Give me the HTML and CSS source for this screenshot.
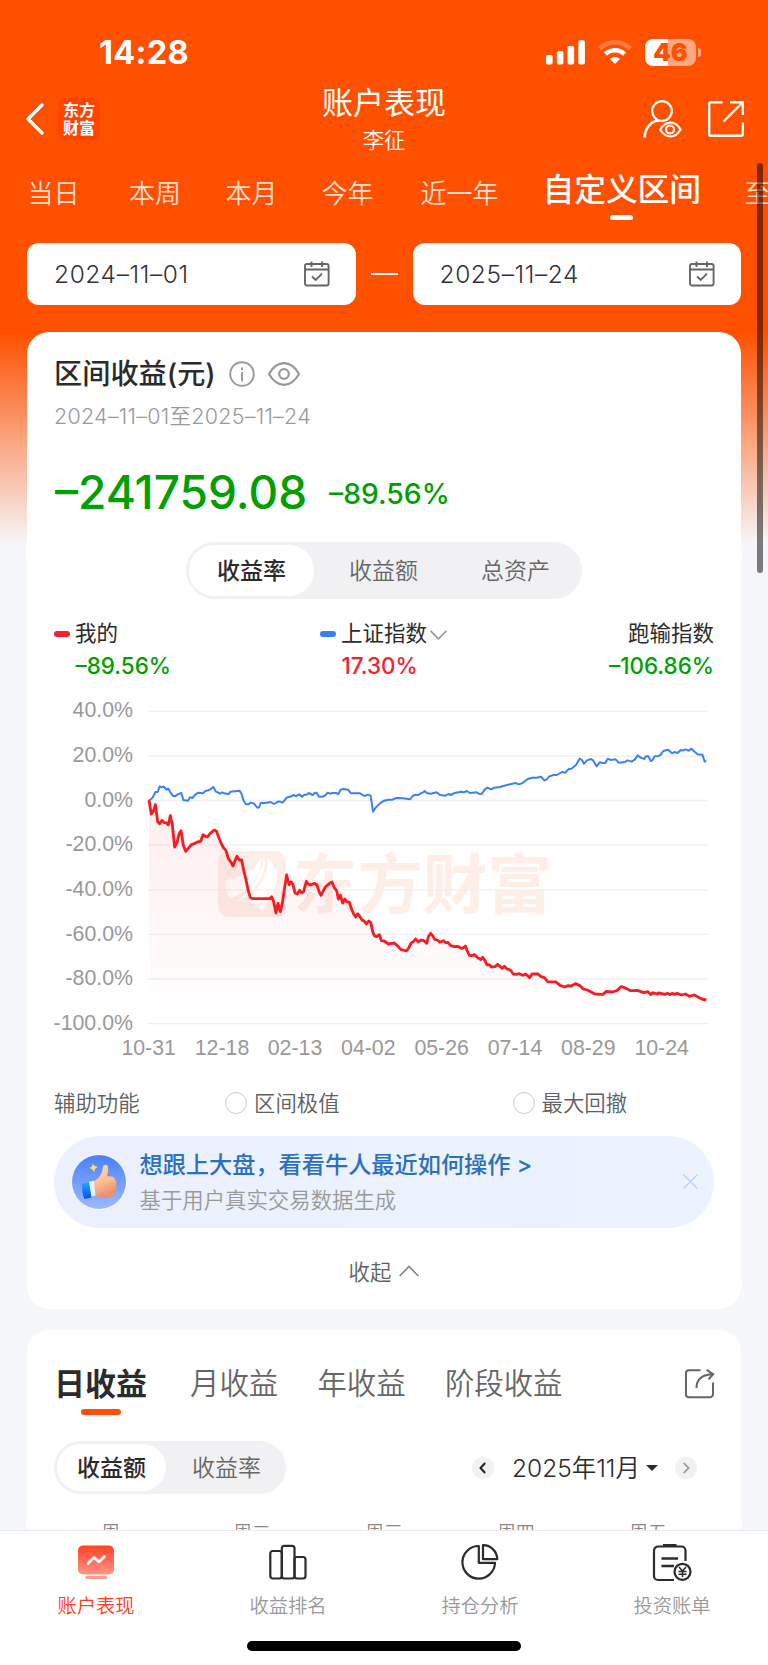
FILE: index.html
```html
<!DOCTYPE html>
<html lang="zh-CN">

<head>
  <meta charset="UTF-8">
  <meta name="viewport" content="width=device-width, initial-scale=1.0">
  <title>账户表现</title>
  <link rel="stylesheet" href="styles.css">
</head>

<body>
  <div class="page">
    <header class="status-bar">
      <span class="time">14:28</span>
      <div class="status-icons">
        <svg width="39" height="25" viewBox="0 0 39 25" fill="#fff">
          <rect x="0" y="15" width="6.6" height="9.6" rx="1.8" />
          <rect x="10.8" y="11" width="6.6" height="13.6" rx="1.8" />
          <rect x="21.5" y="6" width="6.6" height="18.6" rx="1.8" />
          <rect x="32.3" y="0.3" width="6.6" height="24.3" rx="1.8" />
        </svg>
        <svg width="34" height="26" viewBox="0 0 34 26" fill="none" stroke="#fff" stroke-width="4.6">
          <path d="M1.6 9.6a22 22 0 0 1 30.8 0" opacity=".25" />
          <path d="M7.4 15.2a13.6 13.6 0 0 1 19.2 0" />
          <path d="M17 25l-5-5a7.2 7.2 0 0 1 10 0z" fill="#fff" stroke="none" />
        </svg>
        <div class="battery"><span>46</span></div>
      </div>
    </header>

    <nav class="nav">
      <div class="nav-left">
        <svg width="18" height="32" viewBox="0 0 18 32" fill="none" stroke="#fff" stroke-width="3.4" stroke-linecap="round" stroke-linejoin="round">
          <path d="M16 2L2 16l14 14" />
        </svg>
        <div class="logo">东方<br>财富</div>
      </div>
      <div class="nav-title">
        <h1>账户表现</h1>
        <p>李征</p>
      </div>
      <div class="nav-right">
        <svg width="38" height="38" viewBox="0 0 38 38" fill="none" stroke="#fff" stroke-width="2.2">
          <circle cx="19" cy="11" r="9.8" />
          <path d="M1.5 37.5C2 28 8 21 16 20.5" stroke-width="2.6" />
          <path d="M17 29.5c3-4.5 6.500-7 10.500-7s7.500 2.500 10 7c-2.500 4.500-6 7-10 7s-7.500-2.500-10.500-7z" />
          <circle cx="27" cy="29.500" r="4" />
        </svg>
        <svg width="36" height="36" viewBox="0 0 36 36" fill="none" stroke="#fff" stroke-width="2.400">
          <path d="M14.500 1.200H3a1.800 1.800 0 0 0-1.800 1.800v30a1.800 1.800 0 0 0 1.800 1.800h30a1.800 1.800 0 0 0 1.800-1.800V21.500M22 1.200h12.800V14M34.500 1.500L15.500 20.500" />
        </svg>
      </div>
    </nav>

    <div class="range-tabs">
      <span>当日</span>
      <span>本周</span>
      <span>本月</span>
      <span>今年</span>
      <span>近一年</span>
      <span class="active">自定义区间</span>
      <span>至今</span>
    </div>

    <div class="dates">
      <div class="date-box">
        <span>2024–11–01</span>
        <svg width="26" height="26" viewBox="0 0 26 26" fill="none" stroke="#666" stroke-width="1.9">
          <rect x="1" y="3" width="23.600" height="21.500" rx="2" />
          <path d="M1 8.500h23.600M7.500 0.500v5.500M18 0.500v5.500M8 15.500l3.700 3.400 6.300-6.300" />
        </svg>
      </div>
      <i class="date-dash"></i>
      <div class="date-box">
        <span>2025–11–24</span>
        <svg width="26" height="26" viewBox="0 0 26 26" fill="none" stroke="#666" stroke-width="1.9">
          <rect x="1" y="3" width="23.600" height="21.500" rx="2" />
          <path d="M1 8.500h23.600M7.500 0.500v5.500M18 0.500v5.500M8 15.500l3.700 3.400 6.300-6.300" />
        </svg>
      </div>
    </div>

    <section class="card">
      <div class="card-title">
        <h2>区间收益(元)</h2>
        <svg width="26" height="26" viewBox="0 0 26 26" fill="none" stroke="#999" stroke-width="1.900">
          <circle cx="13" cy="13" r="11.800" />
          <path d="M13 11v9.500M13 6.500v2.500" />
        </svg>
        <svg width="32" height="24" viewBox="0 0 32 24" fill="none" stroke="#999" stroke-width="2.200">
          <path d="M1 12C5 5 10 1.200 16 1.200S27 5 31 12c-4 7-9 10.800-15 10.800S5 19 1 12z" stroke-linejoin="round" />
          <circle cx="16" cy="12" r="4.800" />
        </svg>
      </div>
      <p class="card-range">2024–11–01至2025–11–24</p>
      <div class="profit">
        <span class="amount">–241759.08</span>
        <span class="rate">–89.56%</span>
      </div>

      <div class="segment segment-wide">
        <span class="active">收益率</span>
        <span>收益额</span>
        <span>总资产</span>
      </div>

      <div class="legend">
        <div class="legend-item mine">
          <p><i></i>我的</p>
          <b class="green">–89.56%</b>
        </div>
        <div class="legend-item index">
          <p><i></i>上证指数
            <svg width="17" height="10" viewBox="0 0 17 10" fill="none" stroke="#999" stroke-width="1.700">
              <path d="M.6.800l7.900 8 7.900-8" />
            </svg>
          </p>
          <b class="red">17.30%</b>
        </div>
        <div class="legend-item diff">
          <p>跑输指数</p>
          <b class="green">–106.86%</b>
        </div>
      </div>

      <svg class="chart" width="660" height="370" viewBox="42 30 1980 1110">
        <defs>
          <linearGradient id="area" x1="0" y1="0" x2="0" y2="1">
            <stop offset="0" stop-color="#f5222d" stop-opacity=".08" />
            <stop offset="1" stop-color="#f5222d" stop-opacity="0" />
          </linearGradient>
        </defs>

        <!-- watermark -->
        <g class="watermark">
          <path fill-rule="evenodd" d="M564 483h144a30 30 0 0 1 30 30v138a30 30 0 0 1-30 30H564a30 30 0 0 1-30-30V513a30 30 0 0 1 30-30zM555 572c35-8 65-18 82-35 15-15 22-28 28-37-2 45-20 85-70 115l-25 12c-10-18-15-36-15-55zM682 500c35 35 30 75 0 110l-30 42-32-22c45-40 66-80 62-130zM672 500c8 48-15 90-70 130l-14 6c50-40 77-82 84-136zM708 525c12 40-2 80-40 140l-12-14c35-40 53-76 52-126z" />
          <text x="760" y="655">东方财富</text>
        </g>

        <g class="grid">
          <path d="M324 64H2003M324 198H2003M324 331.500H2003M324 465.500H2003M324 599.500H2003M324 733H2003M324 867H2003M324 1001H2003" />
        </g>

        <path fill="url(#area)" d="M327 331L334 372 341 362 346 344 353 395 359 401 366 391 373 398 385 405 391 377 397 405 404 471 411 458 417 432 423 422 430 466 437 484 454 464 482 454 489 434 502 441 523 420 529 423 542 457 558 482 565 506 579 528 591 499 605 510 618 570 631 622 637 626 689 626 695 620 708 669 714 640 721 665 734 592 740 555 747 584 759 583 765 609 791 604 799 574 831 585 843 616 856 591 876 576 890 602 895 627 928 637 947 681 973 694 992 697 1003 737 1018 734 1024 752 1063 759 1099 783 1127 747 1160 760 1172 730 1184 748 1224 757 1276 768 1288 796 1328 802 1354 831 1373 823 1420 852 1469 863 1494 852 1523 875 1574 891 1606 881 1665 912 1689 913 1743 890 1832 914 1999 930 1999 1001 327 1001Z" />

        <polyline class="line-index" points="327,331 334,327 340,319 346,306 353,306 359,289 365,292 372,290 379,299 385,296 392,308 398,317 405,319 413,313 424,309 430,330 444,332 450,322 457,324 467,313 475,308 489,310 496,303 505,301 514,296 520,291 527,304 540,311 547,307 553,310 566,313 571,305 599,302 605,313 611,332 618,343 625,343 632,338 642,341 652,353 657,352 663,338 670,340 692,336 702,342 716,334 728,338 740,323 754,319 760,315 768,318 778,313 786,320 793,314 800,314 806,309 818,315 824,309 830,308 837,320 848,320 856,316 863,308 870,311 877,309 888,309 895,312 902,299 910,297 924,299 933,310 960,310 973,318 984,314 992,317 999,365 1007,353 1020,340 1032,332 1045,329 1057,329 1070,324 1088,325 1110,328 1118,318 1127,314 1135,315 1142,310 1148,308 1154,303 1162,310 1172,311 1190,307 1200,315 1216,317 1225,312 1232,315 1244,309 1264,305 1271,307 1280,303 1290,309 1310,307 1318,312 1326,311 1334,299 1342,293 1354,298 1362,293 1380,291 1401,285 1427,279 1436,283 1446,280 1463,267 1477,263 1490,263 1503,260 1513,271 1520,268 1528,259 1540,255 1550,255 1566,246 1576,248 1585,238 1594,236 1608,225 1619,206 1626,210 1632,221 1641,211 1653,207 1660,212 1670,229 1679,217 1688,219 1696,219 1703,206 1712,210 1727,208 1736,218 1755,216 1762,211 1775,215 1785,208 1793,196 1802,203 1813,207 1818,199 1825,199 1832,213 1838,210 1844,199 1856,198 1862,194 1870,183 1884,179 1896,190 1903,186 1913,189 1922,180 1928,182 1936,178 1946,182 1955,176 1962,184 1973,193 1987,194 1994,215 1999,213" />

        <polyline class="line-mine" points="327,331 334,372 341,362 346,344 353,395 359,401 366,391 373,398 380,399 385,405 391,377 397,405 404,471 411,458 417,432 423,422 430,466 437,484 445,475 454,464 463,461 472,456 482,454 489,434 496,439 502,441 509,432 517,425 523,420 529,423 535,439 542,457 549,471 558,482 565,506 572,515 579,528 585,512 591,499 598,510 605,510 611,540 618,570 625,603 631,622 637,626 689,626 695,620 701,635 708,669 714,640 721,665 727,640 734,592 740,555 747,584 753,575 759,583 765,609 772,612 779,601 785,609 791,604 799,574 804,582 811,585 824,580 831,585 837,604 843,616 850,602 856,591 862,586 869,580 876,576 882,592 890,602 895,627 901,616 908,639 914,627 920,635 928,637 935,658 941,672 947,681 953,671 959,679 966,690 973,694 979,702 986,693 992,697 998,725 1003,737 1010,740 1018,734 1024,752 1033,753 1045,762 1063,759 1072,767 1082,778 1099,783 1106,774 1114,758 1120,755 1127,747 1135,756 1142,750 1152,752 1160,760 1166,738 1172,730 1178,737 1184,748 1192,750 1200,757 1210,752 1218,759 1224,757 1232,767 1242,770 1253,769 1263,775 1269,774 1276,768 1282,783 1288,796 1295,797 1303,794 1312,802 1322,809 1328,802 1335,812 1341,825 1348,824 1354,831 1365,830 1373,823 1380,829 1386,835 1393,829 1401,837 1411,840 1420,852 1429,853 1438,851 1448,856 1457,852 1469,863 1476,852 1494,852 1503,860 1513,863 1523,875 1548,876 1560,886 1574,891 1584,887 1594,888 1606,881 1620,887 1630,897 1642,900 1665,912 1689,913 1699,904 1717,906 1732,901 1743,890 1754,893 1772,902 1792,901 1811,908 1824,905 1832,914 1838,908 1851,912 1856,909 1875,913 1883,910 1890,914 1896,910 1904,913 1911,910 1925,915 1936,912 1948,919 1962,915 1973,920 1985,927 1999,930" />

        <g class="axis axis-y">
          <text x="279" y="82">40.0%</text>
          <text x="279" y="216">20.0%</text>
          <text x="279" y="350">0.0%</text>
          <text x="279" y="484">-20.0%</text>
          <text x="279" y="618">-40.0%</text>
          <text x="279" y="752">-60.0%</text>
          <text x="279" y="886">-80.0%</text>
          <text x="279" y="1020">-100.0%</text>
        </g>
        <g class="axis axis-x">
          <text x="326" y="1096">10-31</text>
          <text x="546" y="1096">12-18</text>
          <text x="765" y="1096">02-13</text>
          <text x="985" y="1096">04-02</text>
          <text x="1205" y="1096">05-26</text>
          <text x="1425" y="1096">07-14</text>
          <text x="1645" y="1096">08-29</text>
          <text x="1865" y="1096">10-24</text>
        </g>
      </svg>

      <div class="assist">
        <span>辅助功能</span>
        <label><i></i>区间极值</label>
        <label><i></i>最大回撤</label>
      </div>

      <div class="banner">
        <svg class="thumb" width="56" height="56" viewBox="0 0 56 56">
          <defs>
            <linearGradient id="disc" x1="0" y1="0" x2="0" y2="1">
              <stop offset="0" stop-color="#4880f8" />
              <stop offset="1" stop-color="#9dbaff" />
            </linearGradient>
            <linearGradient id="skin" x1="0" y1="0" x2=".3" y2="1">
              <stop offset="0" stop-color="#ffdcae" />
              <stop offset=".6" stop-color="#fdbd92" />
              <stop offset="1" stop-color="#e98c70" />
            </linearGradient>
            <linearGradient id="cuff" x1="0" y1="0" x2="0" y2="1">
              <stop offset="0" stop-color="#25a8ff" />
              <stop offset="1" stop-color="#0450e8" />
            </linearGradient>
          </defs>
          <circle cx="28" cy="28" r="27.500" fill="url(#disc)" stroke="#fff" />
          <path d="M22 27c4-1 7-4 8.500-8l1.500-6c.5-3 4.500-3 5 0 .6 4-.5 7-1 9.500 3-.5 8 0 8 3.500 2 2 1.500 4 1 5 1 2 .5 4-.5 5 .5 6-4 8-9 8-5.500.500-9-1-13-3z" fill="url(#skin)" />
          <path d="M37 29.500h7.500M37.500 35h7M37 40h6" stroke="#f0a37c" stroke-width=".7" fill="none" />
          <path d="M18 27.500l5-.500 1.500 14.500-5 1.500z" fill="#e8f1ff" />
          <path d="M11 29.500c3 0 5-.5 7-1.500l2.500 15.500-7 1.500c-2-4-2.500-9-2.500-15.500z" fill="url(#cuff)" />
          <path d="M22 9c1 3 2 3.500 5 4-3 1.500-3.500 2-3.500 5.500-1.500-2.500-2.500-3.500-5-4.500 2.500-1 3-2 3.500-5z" fill="#ffe25a" />
        </svg>
        <div class="banner-text">
          <h3>想跟上大盘，看看牛人最近如何操作 &gt;</h3>
          <p>基于用户真实交易数据生成</p>
        </div>
        <svg width="15" height="15" viewBox="0 0 15 15" stroke="#b5d2f0" stroke-width="1.200">
          <path d="M.5.500l14 14M14.500.500l-14 14" />
        </svg>
      </div>

      <div class="collapse">
        <span>收起</span>
        <svg width="20" height="12" viewBox="0 0 20 12" fill="none" stroke="#888" stroke-width="1.700">
          <path d="M.7 11L10 1.500 19.300 11" />
        </svg>
      </div>
    </section>

    <section class="card card-daily">
      <div class="period-tabs">
        <span class="active">日收益</span>
        <span>月收益</span>
        <span>年收益</span>
        <span>阶段收益</span>
        <svg width="29" height="29" viewBox="0 0 29 29" fill="none" stroke="#666" stroke-width="2">
          <path d="M15.500 1.200H4a3 3 0 0 0-3 3v21a3 3 0 0 0 3 3h21a3 3 0 0 0 3-3V13.500" />
          <path d="M11.500 19c0-8 4-13.500 16.500-13.800M21.500.800l6.700 4.400-4.700 5" />
        </svg>
      </div>

      <div class="month-row">
        <div class="segment">
          <span class="active">收益额</span>
          <span>收益率</span>
        </div>
        <div class="month">
          <i class="arrow">
            <svg width="8" height="12" viewBox="0 0 8 12" fill="none" stroke="#222" stroke-width="2"><path d="M6.200 1L1.500 6l4.700 5" /></svg>
          </i>
          <span>2025年11月</span>
          <i class="caret"></i>
          <i class="arrow">
            <svg width="8" height="12" viewBox="0 0 8 12" fill="none" stroke="#999" stroke-width="1.800"><path d="M1.800 1l4.700 5-4.700 5" /></svg>
          </i>
        </div>
      </div>

      <div class="weekdays">
        <span>周一</span>
        <span>周二</span>
        <span>周三</span>
        <span>周四</span>
        <span>周五</span>
      </div>
    </section>
    <div class="scrollbar"></div>
  </div>

  <footer class="tabbar">
    <div class="tabbar-items">
      <a class="active">
        <svg width="38" height="38" viewBox="0 0 38 38">
          <defs>
            <linearGradient id="screen" x1="0" y1="0" x2="0" y2="1">
              <stop offset="0" stop-color="#ff4127" />
              <stop offset="1" stop-color="#ff9485" />
            </linearGradient>
          </defs>
          <rect x="1" y="1.500" width="36" height="29" rx="5" fill="url(#screen)" />
          <rect x="8.500" y="32" width="21.500" height="3" rx="1" fill="#ff9c8f" />
          <path d="M11 19.500l6-6 5 4.500 5.500-5.500" fill="none" stroke="#fff" stroke-width="2.600" stroke-linecap="round" stroke-linejoin="round" />
        </svg>
        账户表现
      </a>
      <a>
        <svg width="38" height="38" viewBox="0 0 38 38" fill="none" stroke="#2b2b2b" stroke-width="2.200">
          <rect x="1.300" y="7" width="11.500" height="27.500" rx="2.500" />
          <rect x="12.800" y="1.800" width="12.700" height="32.700" rx="2.500" />
          <rect x="25.500" y="13" width="11" height="21.500" rx="2.500" />
        </svg>
        收益排名
      </a>
      <a>
        <svg width="38" height="38" viewBox="0 0 38 38" fill="none" stroke="#2b2b2b" stroke-width="2.200" stroke-linejoin="round">
          <path d="M17.800 2A16.300 16.300 0 1 0 34 18.800H17.800z" />
          <path d="M22 1.200c7.500-.2 14 6 14.300 14H22z" />
        </svg>
        持仓分析
      </a>
      <a>
        <svg width="40" height="38" viewBox="0 0 40 38" fill="none" stroke="#2b2b2b" stroke-width="2.200">
          <path d="M22 36H6a4 4 0 0 1-4-4V6.500a4 4 0 0 1 4-4h23.500a4 4 0 0 1 4 4V17" />
          <path d="M11 1.300h13.500M9.500 14.500H26M9.500 22H22" stroke-width="2.600" />
          <circle cx="30.500" cy="27.800" r="8" />
          <path d="M27 23l3.500 4 3.500-4M30.500 27v6M26.500 27.500h8M26.500 30.200h8" stroke-width="1.500" />
        </svg>
        投资账单
      </a>
    </div>
    <div class="home-indicator"></div>
  </footer>
</body>

</html>
```
FILE: styles.css
```css
* {
  box-sizing: border-box;
  margin: 0;
  padding: 0;
}

body {
  width: 768px;
  height: 1665px;
  overflow: hidden;
  background: #f6f7fa;
  color: #2b2b2b;
  font-family: Inter, 'Noto Sans CJK SC', sans-serif;
  font-weight: 350;
}

svg {
  display: block;
  flex-shrink: 0;
  overflow: visible;
}

i {
  font-style: normal;
}

.page {
  position: relative;
  height: 1530px;
  overflow: hidden;
  background: linear-gradient(#ff5000 0, #ff5000 332px, #fb9468 420px, #f6f7fa 546px);
}

/* status bar */
.status-bar {
  display: flex;
  align-items: center;
  justify-content: space-between;
  height: 84px;
  padding: 20px 67px 0 99px;
  color: #fff;
}

.time {
  font-size: 32.5px;
  font-weight: 750;
  letter-spacing: 0.3px;
}

.status-icons {
  display: flex;
  align-items: center;
  gap: 13px;
}

.battery {
  position: relative;
  width: 51px;
  height: 27px;
  margin-right: 5px;
  border-radius: 8px;
  background: linear-gradient(90deg, #fff 46%, #ffa780 46%);
  color: #ff5000;
  font-size: 25px;
  font-weight: 900;
  line-height: 27px;
  text-align: center;
}

.battery::after {
  content: '';
  position: absolute;
  left: 53px;
  top: 9px;
  width: 3px;
  height: 9px;
  border-radius: 0 4px 4px 0;
  background: #ffa780;
}

/* nav */
.nav {
  display: grid;
  grid-template-columns: 1fr auto 1fr;
  height: 74px;
  padding: 0 24px 0 26px;
  color: #fff;
}

.nav-left,
.nav-right {
  display: flex;
  align-items: center;
  padding-bottom: 5px;
}

.nav-left {
  gap: 14px;
}

.nav-right {
  justify-content: flex-end;
  gap: 27px;
}

.logo {
  width: 42px;
  height: 42px;
  padding-top: 3px;
  border-radius: 8px;
  background: #ff4300;
  font-size: 16px;
  font-weight: 700;
  line-height: 18px;
  text-align: center;
}

.nav-title {
  margin-left: -2px;
  text-align: center;
}

.nav-title h1 {
  font-size: 31px;
  font-weight: 400;
  line-height: 38px;
}

.nav-title p {
  font-size: 21.3px;
  line-height: 36px;
}

/* range tabs */
.range-tabs {
  display: grid;
  grid-template-columns: 101.5px 96.5px 96px 99px 122px 202px 60px;
  height: 85px;
  padding-left: 27.5px;
  color: rgba(255, 255, 255, 0.82);
  font-size: 26px;
  line-height: 72px;
  white-space: nowrap;
}

.range-tabs .active {
  position: relative;
  width: 160px;
  color: #fff;
  font-size: 31.7px;
  font-weight: 500;
  line-height: 63px;
}

.range-tabs .active::after {
  content: '';
  position: absolute;
  left: 67.5px;
  top: 57px;
  width: 23px;
  height: 5px;
  border-radius: 3px;
  background: #fff;
}

/* dates */
.dates {
  display: flex;
  align-items: center;
  justify-content: space-between;
  margin: 0 27px 27px;
}

.date-box {
  display: flex;
  align-items: center;
  justify-content: space-between;
  width: 328.5px;
  height: 62px;
  padding: 0 26px 0 27px;
  border-radius: 12px;
  background: #fff;
  color: #333;
  font-size: 24.5px;
  letter-spacing: 0.6px;
}

.date-dash {
  width: 27px;
  height: 2px;
  background: #fff;
}

/* cards */
.card {
  margin: 0 27px;
  padding: 22px 27px 0;
  border-radius: 22px;
  background: #fff;
}

.card-title {
  display: flex;
  align-items: center;
  height: 40px;
}

.card-title h2 {
  margin: -5px 13px 0 0;
  font-size: 28.2px;
  font-weight: 500;
}

.card-title svg + svg {
  margin-left: 13px;
}

.card-range {
  color: #999;
  font-size: 21.5px;
  letter-spacing: 0.25px;
  line-height: 45px;
}

.profit {
  display: flex;
  align-items: center;
  gap: 22px;
  height: 103px;
  padding: 3px 0 0 1px;
  color: #00a000;
  font-weight: 500;
}

.amount {
  font-size: 46px;
}

.rate {
  padding-top: 3px;
  font-size: 28.3px;
}

.segment {
  display: flex;
  width: 232px;
  height: 53px;
  padding: 3px;
  border-radius: 27px;
  background: #f1f1f4;
  color: #666;
  font-size: 23px;
  line-height: 48px;
  text-align: center;
}

.segment span {
  flex: none;
  width: 109px;
  height: 47px;
}

.segment span + span {
  width: 121px;
}

.segment .active {
  border-radius: 25px;
  background: #fff;
  color: #2b2b2b;
  font-weight: 500;
}

.segment-wide {
  width: 396px;
  height: 57px;
  margin: 0 auto;
  border-radius: 29px;
  line-height: 52px;
}

.segment-wide .active {
  width: 125px;
  height: 51px;
  margin-right: 3.5px;
}

.segment-wide span + span {
  width: 132px;
}

.legend {
  display: grid;
  grid-template-columns: 266px 1fr auto;
  margin: 18px 0 19px;
}

.legend-item p {
  display: flex;
  align-items: center;
  font-size: 21.5px;
  font-weight: 400;
  line-height: 32px;
}

.legend-item p i {
  width: 16px;
  height: 6px;
  margin: 1px 5px 0 0;
  border-radius: 3px;
}

.legend-item p svg {
  margin: 3px 0 0 3px;
}

.legend-item b {
  display: block;
  margin-left: 21.5px;
  padding-top: 2px;
  font-size: 22.4px;
  font-weight: 450;
  line-height: 30px;
}

.mine i {
  background: #f5222d;
}

.index i {
  background: #3b7ff0;
}

.diff {
  display: flex;
  flex-direction: column;
  align-items: flex-end;
}

.diff b {
  margin-left: 0;
}

.green {
  color: #00a000;
}

.red {
  color: #f5222d;
}

/* chart */
.grid path {
  stroke: #edf0f4;
  stroke-width: 4;
}

.line-index,
.line-mine {
  fill: none;
  stroke: #3b82f0;
  stroke-width: 6;
  stroke-linejoin: round;
}

.line-mine {
  stroke: #f51d22;
  stroke-width: 8.5;
}

.watermark {
  fill: #fdeee7;
  font-family: 'Noto Sans CJK SC', sans-serif;
  font-size: 194px;
  font-weight: 700;
}

.axis {
  fill: #999;
  font-family: 'Liberation Sans', sans-serif;
  font-size: 64px;
}

.axis-y {
  text-anchor: end;
}

.axis-x {
  text-anchor: middle;
}

.assist {
  display: grid;
  grid-template-columns: 171px 287.5px 1fr;
  align-items: center;
  height: 65.5px;
  padding-bottom: 1px;
  color: #606060;
  font-size: 21.4px;
}

.assist span,
.assist label {
  margin-top: -1px;
}

.assist label {
  display: flex;
  align-items: center;
  gap: 7px;
}

.assist i {
  width: 22px;
  height: 22px;
  margin-top: 2px;
  border: 1.8px solid #ccc;
  border-radius: 50%;
}

.banner {
  display: flex;
  align-items: center;
  height: 92.5px;
  padding: 0 16px 0 16.5px;
  border-radius: 46px;
  background: linear-gradient(90deg, #ecf0fc, #ebf3ff);
}

.banner-text {
  flex: 1;
  margin-left: 13px;
}

.banner-text h3 {
  padding-top: 1px;
  color: #2a70c2;
  font-size: 23.2px;
  font-weight: 500;
  line-height: 36px;
}

.banner-text p {
  color: #999;
  font-size: 21.4px;
  line-height: 35px;
}

.collapse {
  display: flex;
  align-items: center;
  justify-content: center;
  gap: 8px;
  height: 81px;
  padding-top: 4px;
  color: #606060;
  font-size: 21.4px;
}

/* daily card */
.card-daily {
  margin-top: 21px;
  padding-top: 0;
}

.period-tabs {
  display: flex;
  align-items: center;
  height: 108px;
  color: #666;
  font-size: 29.4px;
}

.period-tabs span {
  margin: -6px 39.3px 0 0;
}

.period-tabs .active {
  position: relative;
  margin-right: 43px;
  color: #2b2b2b;
  font-size: 31px;
  font-weight: 700;
}

.period-tabs .active::after {
  content: '';
  position: absolute;
  left: 27px;
  bottom: -11px;
  width: 40px;
  height: 6px;
  border-radius: 3px;
  background: #ff5000;
}

.period-tabs svg {
  margin: -1px 0 0 auto;
}

.month-row {
  display: flex;
  align-items: center;
  justify-content: space-between;
  height: 59px;
}

.month {
  display: flex;
  align-items: center;
  padding-right: 17px;
  font-size: 24.5px;
}

.arrow {
  display: flex;
  align-items: center;
  justify-content: center;
  width: 22px;
  height: 22px;
  border-radius: 50%;
  background: #f1f1f4;
}

.month span {
  margin: -2px 0 0 18px;
}

.caret {
  margin: 0 17px 0 6px;
  border: 6px solid transparent;
  border-top: 6px solid #2b2b2b;
  border-bottom: 0;
}

.weekdays {
  display: grid;
  grid-template-columns: repeat(5, 1fr);
  color: #888;
  font-size: 18.7px;
  line-height: 72px;
  text-align: center;
}

.scrollbar {
  position: absolute;
  left: 757px;
  top: 163px;
  width: 5.5px;
  height: 410px;
  border-radius: 3px;
  background: rgba(0, 0, 0, 0.5);
}

/* bottom bar */
.tabbar {
  height: 135px;
  border-top: 1px solid #e9eaed;
  background: #fff;
}

.tabbar-items {
  display: grid;
  grid-template-columns: repeat(4, 1fr);
  height: 110px;
  padding-top: 13px;
}

.tabbar a {
  display: flex;
  flex-direction: column;
  align-items: center;
  color: #999;
  font-size: 19.3px;
  line-height: 48px;
}

.tabbar .active {
  color: #ff3b20;
}

.home-indicator {
  width: 274px;
  height: 9.5px;
  margin: 0 auto;
  border-radius: 5px;
  background: #000;
}
```
